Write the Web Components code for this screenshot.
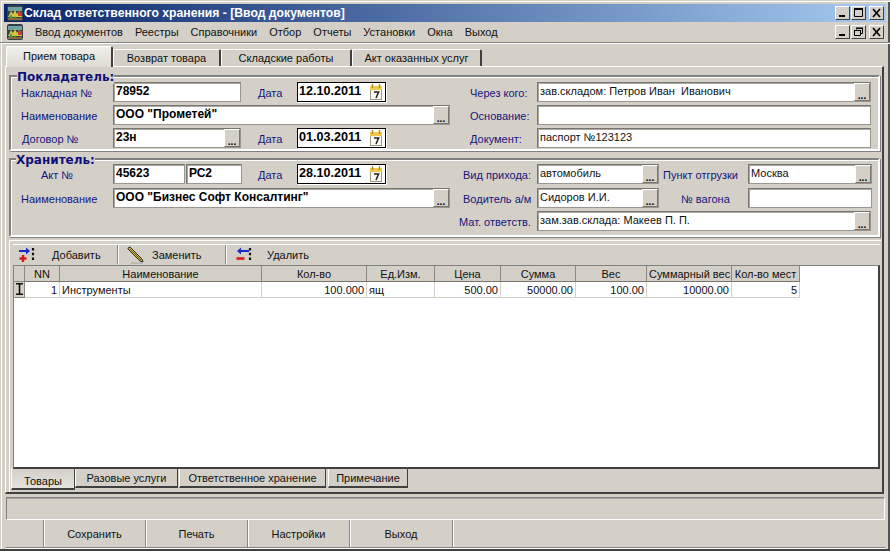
<!DOCTYPE html>
<html lang="ru">
<head>
<meta charset="utf-8">
<title>Склад ответственного хранения</title>
<style>
    html, body { margin: 0; padding: 0; background: #d4d0c8; overflow: hidden; }
    body { font: 11px "Liberation Sans", sans-serif; color: #000; }
</style>
</head>
<body>
<app-window>
    <title-bar>Склад ответственного хранения - [Ввод документов]</title-bar>
    <menu-bar>
        <menu-item>Ввод документов</menu-item>
        <menu-item>Реестры</menu-item>
        <menu-item>Справочники</menu-item>
        <menu-item>Отбор</menu-item>
        <menu-item>Отчеты</menu-item>
        <menu-item>Установки</menu-item>
        <menu-item>Окна</menu-item>
        <menu-item>Выход</menu-item>
    </menu-bar>
    <tab-strip>
        <top-tab active style="width:107px">Прием товара</top-tab>
        <top-tab style="width:108px">Возврат товара</top-tab>
        <top-tab style="width:131px">Складские работы</top-tab>
        <top-tab style="width:130px">Акт оказанных услуг</top-tab>
    </tab-strip>
    <tab-page>
        <form-group legend="Покладатель:" style="--cols:102px 128px 56px 89px 64px 87px 334px; --gap:3px; --pad-top:5px; --pad-bottom:1px">
            <form-label style="padding-left:10px">Накладная №</form-label>
            <text-field bold>78952</text-field>
            <form-label style="padding-left:17px">Дата</form-label>
            <date-field>12.10.2011</date-field>
            <span></span>
            <form-label style="padding-left:20px">Через кого:</form-label>
            <text-field picker>зав.складом: Петров Иван&nbsp; Иванович</text-field>

            <form-label style="padding-left:10px">Наименование</form-label>
            <text-field bold picker style="grid-column:2 / 6">ООО "Прометей"</text-field>
            <form-label style="padding-left:20px">Основание:</form-label>
            <text-field></text-field>

            <form-label style="padding-left:11px">Договор №</form-label>
            <text-field bold picker>23н</text-field>
            <form-label style="padding-left:17px">Дата</form-label>
            <date-field>01.03.2011</date-field>
            <span></span>
            <form-label style="padding-left:20px">Документ:</form-label>
            <text-field>паспорт №123123</text-field>
        </form-group>
        <form-group legend="Хранитель:" style="--cols:102px 72px 57px 55px 89px 64px 87px 122px 89px 124px; --gap:3.5px; --pad-top:4px; --pad-bottom:3.5px; --legend-left:5px">
            <form-label style="padding-left:30px">Акт №</form-label>
            <text-field bold>45623</text-field>
            <text-field bold style="margin-left:1px">РС2</text-field>
            <form-label style="padding-left:16px">Дата</form-label>
            <date-field>28.10.2011</date-field>
            <span></span>
            <form-label style="padding-left:13px">Вид прихода:</form-label>
            <text-field picker>автомобиль</text-field>
            <form-label style="padding-left:4px">Пункт отгрузки</form-label>
            <text-field picker>Москва</text-field>

            <form-label style="padding-left:10px">Наименование</form-label>
            <text-field bold picker style="grid-column:2 / 7">ООО "Бизнес Софт Консалтинг"</text-field>
            <form-label style="padding-left:13px">Водитель а/м</form-label>
            <text-field picker>Сидоров И.И.</text-field>
            <form-label style="padding-left:22px">№ вагона</form-label>
            <text-field></text-field>

            <span style="grid-column:1 / 7"></span>
            <form-label style="padding-left:9px">Мат. ответств.</form-label>
            <text-field picker style="grid-column:8 / 11; margin-right:1px">зам.зав.склада: Макеев П. П.</text-field>
        </form-group>
        <goods-panel>
            <tool-bar>
                <tool-button icon="add" style="width:101px; --label-left:16px">Добавить</tool-button>
                <tool-button icon="edit" style="width:108px; --icon-left:9px; --label-left:7px">Заменить</tool-button>
                <tool-button icon="remove" style="width:100px; --icon-left:9px; --label-left:14px">Удалить</tool-button>
            </tool-bar>
            <data-grid></data-grid>
            <bottom-tabs>
                <bottom-tab active style="width:64px">Товары</bottom-tab>
                <bottom-tab style="width:103px">Разовые услуги</bottom-tab>
                <bottom-tab style="width:147px; margin-left:1px">Ответственное хранение</bottom-tab>
                <bottom-tab style="width:80px; margin-left:2px">Примечание</bottom-tab>
            </bottom-tabs>
        </goods-panel>
    </tab-page>
    <status-panel></status-panel>
    <command-bar>
        <command-button style="width:38px"></command-button>
        <command-button style="width:102px">Сохранить</command-button>
        <command-button style="width:102px">Печать</command-button>
        <command-button style="width:102px">Настройки</command-button>
        <command-button style="width:103px">Выход</command-button>
        <command-button style="flex:1"></command-button>
    </command-bar>
</app-window>

<script>
const uiFont = '11px "Liberation Sans", sans-serif';
const boldFont = 'bold 12px "Liberation Sans", sans-serif';

const appIcon = `
<svg width="18" height="18" viewBox="0 0 18 18">
    <rect x="1" y="1" width="16" height="16" rx="2" fill="#33404a"/>
    <rect x="2" y="3" width="14" height="4" fill="#6fa3a0"/>
    <path d="M2 13l3-6 2 3 2-4 2 4 2-3 3 4v2H2z" fill="#d8c53a"/>
    <path d="M3 14l2-4 2 4zM8 15l1-3 2 3z" fill="#3e9a3c"/>
    <rect x="12" y="8" width="4" height="4" fill="#c8402c"/>
    <rect x="2" y="14" width="14" height="2" fill="#8a6a3a"/>
</svg>`;

const captionStyle = `
    .caption { display: flex; }
    .caption button {
        width: 15px;
        height: 14px;
        padding: 0;
        margin: 0;
        background: #d4d0c8;
        border: 1px solid;
        border-color: #fff #404040 #404040 #fff;
        display: flex;
        align-items: center;
        justify-content: center;
    }
    .caption button + button { margin-left: 1px; }
    .caption button:last-child { margin-left: 3px; }
`;

const captionIcons = {
    min: '<svg width="11" height="10" viewBox="0 0 11 10"><rect x="2" y="7" width="6" height="2" fill="#000"/></svg>',
    max: '<svg width="11" height="10" viewBox="0 0 11 10"><path d="M1.5 1.5h8v7h-8z M1 1.5h9" fill="none" stroke="#000"/><rect x="1" y="0" width="9" height="2" fill="#000"/></svg>',
    restore: '<svg width="11" height="10" viewBox="0 0 11 10"><path d="M3.5 2.5v-1h6v5h-2M1.5 3.5h6v5h-6z" fill="none" stroke="#000"/><path d="M3 1h7M1 3.5h7" stroke="#000"/></svg>',
    close: '<svg width="11" height="10" viewBox="0 0 11 10"><path d="M2 1l7 8M9 1l-7 8" stroke="#000" stroke-width="1.6"/></svg>'
};

customElements.define('app-window', class extends HTMLElement {
    constructor() {
        super();
        this.attachShadow({mode: 'open'}).innerHTML = `
        <style>
            :host {
                display: flex;
                flex-direction: column;
                box-sizing: border-box;
                width: 890px;
                height: 551px;
                padding: 4px 0 0;
                background: #d4d0c8;
                border-bottom: 2px solid #404040;
                box-shadow: inset 1px 1px 0 #d4d0c8, inset 2px 2px 0 #fff, inset -2px 0 0 #55534e;
            }
        </style>
        <slot></slot>`;
    }
});

customElements.define('title-bar', class extends HTMLElement {
    constructor() {
        super();
        this.attachShadow({mode: 'open'}).innerHTML = `
        <style>
            :host {
                display: flex;
                align-items: center;
                flex: none;
                height: 18px;
                margin: 0 4px;
                padding-left: 2px;
                color: #fff;
                font: bold 12.2px "Liberation Sans", sans-serif;
                background: linear-gradient(90deg, #0a246a, #a6caf0);
            }
            svg { flex: none; margin-right: 0; }
            .text { flex: 1; white-space: nowrap; }
            .caption { margin-right: 2px; }
            ${captionStyle}
        </style>
        ${appIcon}
        <div class="text"><slot></slot></div>
        <div class="caption">
            <button>${captionIcons.min}</button>
            <button>${captionIcons.max}</button>
            <button>${captionIcons.close}</button>
        </div>`;
    }
});

customElements.define('menu-bar', class extends HTMLElement {
    constructor() {
        super();
        this.attachShadow({mode: 'open'}).innerHTML = `
        <style>
            :host {
                display: flex;
                align-items: center;
                flex: none;
                box-sizing: border-box;
                height: 22px;
                padding: 0 6px 2px 6px;
                border-bottom: 1px solid #fff;
                box-shadow: inset 0 -1px 0 #808080;
            }
            .items { flex: 1; display: flex; margin-left: 5px; }
            ${captionStyle}
        </style>
        ${appIcon}
        <div class="items"><slot></slot></div>
        <div class="caption">
            <button>${captionIcons.min}</button>
            <button>${captionIcons.restore}</button>
            <button>${captionIcons.close}</button>
        </div>`;
    }
});

customElements.define('menu-item', class extends HTMLElement {
    constructor() {
        super();
        this.attachShadow({mode: 'open'}).innerHTML = `
        <style>
            :host {
                display: block;
                padding: 0 6px;
                font: ${uiFont};
                color: #111;
                white-space: nowrap;
            }
        </style>
        <slot></slot>`;
    }
});

customElements.define('tab-strip', class extends HTMLElement {
    constructor() {
        super();
        this.attachShadow({mode: 'open'}).innerHTML = `
        <style>
            :host {
                display: flex;
                align-items: flex-end;
                flex: none;
                height: 20px;
                margin-top: 2px;
                padding-left: 6px;
                position: relative;
                z-index: 1;
            }
        </style>
        <slot></slot>`;
    }
});

customElements.define('top-tab', class extends HTMLElement {
    constructor() {
        super();
        this.attachShadow({mode: 'open'}).innerHTML = `
        <style>
            :host {
                display: flex;
                align-items: center;
                justify-content: center;
                box-sizing: border-box;
                height: 17px;
                border-top: 1px solid #fff;
                border-left: 1px solid #fff;
                border-right: 2px solid #404040;
                border-radius: 2px 2px 0 0;
                font: ${uiFont};
                color: #111;
                white-space: nowrap;
            }
            :host([active]) {
                height: 21px;
                margin-bottom: -1px;
                padding-bottom: 2px;
                background: linear-gradient(#f0efea, #dedbd3);
            }
        </style>
        <slot></slot>`;
    }
});

customElements.define('tab-page', class extends HTMLElement {
    constructor() {
        super();
        this.attachShadow({mode: 'open'}).innerHTML = `
        <style>
            :host {
                display: flex;
                flex-direction: column;
                flex: 1;
                min-height: 0;
                box-sizing: border-box;
                margin: 0 5px 0 5px;
                padding: 8px 3px 0 3px;
                border-top: 1px solid #fff;
                border-left: 1px solid #fff;
                border-right: 2px solid #404040;
                border-bottom: 2px solid #404040;
                margin-right: 6px;
            }
        </style>
        <slot></slot>`;
    }
});

customElements.define('form-group', class extends HTMLElement {
    constructor() {
        super();
        this.attachShadow({mode: 'open'}).innerHTML = `
        <style>
            :host {
                display: block;
                position: relative;
                flex: none;
                width: 871px;
                box-sizing: border-box;
                margin-bottom: 7px;
                border: 2px solid;
                border-color: #808080 #fff #fff #808080;
                box-shadow: inset 1px 1px 0 #fff, 1px 1px 0 #808080;
            }
            :host(:nth-of-type(2)) { margin-bottom: 3px; }
            .legend {
                position: absolute;
                left: var(--legend-left, 6px);
                top: -6px;
                background: #d4d0c8;
                color: #10107a;
                font: bold 12px "DejaVu Sans", sans-serif;
                line-height: 13px;
                white-space: nowrap;
            }
            .rows {
                display: grid;
                grid-template-columns: var(--cols);
                grid-auto-rows: 20px;
                row-gap: var(--gap);
                padding: var(--pad-top) 0 var(--pad-bottom);
            }
        </style>
        <div class="legend"></div>
        <div class="rows"><slot></slot></div>`;
    }

    connectedCallback() {
        this.shadowRoot.querySelector('.legend').textContent = this.getAttribute('legend');
    }
});

customElements.define('form-label', class extends HTMLElement {
    constructor() {
        super();
        this.attachShadow({mode: 'open'}).innerHTML = `
        <style>
            :host {
                display: flex;
                align-items: center;
                padding-top: 2px;
                box-sizing: border-box;
                color: #14147c;
                font: ${uiFont};
                white-space: nowrap;
            }
        </style>
        <slot></slot>`;
    }
});

customElements.define('text-field', class extends HTMLElement {
    constructor() {
        super();
        this.attachShadow({mode: 'open'}).innerHTML = `
        <style>
            :host {
                display: flex;
                box-sizing: border-box;
                height: 20px;
                background: #fff;
                border: 1px solid;
                border-color: #77756e #98968f #98968f #77756e;
                box-shadow: inset 1px 1px 0 #aaa8a2;
                font: ${uiFont};
                color: #111;
                min-width: 0;
            }
            :host([bold]) { font: ${boldFont}; color: #000; }
            .text { flex: 1; padding: 1px 0 0 2px; white-space: nowrap; overflow: hidden; line-height: 14px; }
            button {
                display: none;
                flex: none;
                width: 16px;
                margin: 0;
                padding: 0;
                background: #d4d0c8;
                border: 1px solid;
                border-color: #fff #77756e #77756e #fff;
                font: bold 10px "Liberation Sans", sans-serif;
                line-height: 24px;
                height: 18px;
                overflow: hidden;
            }
            :host([picker]) button { display: block; }
        </style>
        <div class="text"><slot></slot></div>
        <button>...</button>`;
    }
});

customElements.define('date-field', class extends HTMLElement {
    constructor() {
        super();
        this.attachShadow({mode: 'open'}).innerHTML = `
        <style>
            :host {
                display: flex;
                align-items: flex-start;
                box-sizing: border-box;
                height: 20px;
                background: #fff;
                border: 1px solid #000;
                box-shadow: 1px 1px 0 #fff;
                font: bold 12.6px "Liberation Sans", sans-serif;
                color: #000;
            }
            .text { flex: 1; padding: 1px 0 0 1px; line-height: 14px; white-space: nowrap; }
            svg { flex: none; margin: 0 2px 0 0; }
        </style>
        <div class="text"><slot></slot></div>
        <svg width="14" height="18" viewBox="0 0 14 18">
            <rect x="1.5" y="3.5" width="11" height="13" fill="#fbfaf4" stroke="#a09a80"/>
            <rect x="1" y="3" width="12" height="4" fill="#f0c84c"/>
            <path d="M3.5 1v4M10.5 1v4" stroke="#b08a20" stroke-width="1.4"/>
            <path d="M5 9h4.6L7 15" fill="none" stroke="#222" stroke-width="1.5"/>
        </svg>`;
    }
});

customElements.define('goods-panel', class extends HTMLElement {
    constructor() {
        super();
        this.attachShadow({mode: 'open'}).innerHTML = `
        <style>
            :host {
                display: flex;
                flex-direction: column;
                flex: 1;
                min-height: 0;
                width: 872px;
                box-sizing: border-box;
                padding: 3px 1px 0 3px;
                border-top: 1px solid #fff;
                border-left: 1px solid #fff;
            }
        </style>
        <slot></slot>`;
    }
});

customElements.define('tool-bar', class extends HTMLElement {
    constructor() {
        super();
        this.attachShadow({mode: 'open'}).innerHTML = `
        <style>
            :host {
                display: flex;
                align-items: center;
                flex: none;
                box-sizing: border-box;
                height: 21px;
                padding-left: 4px;
                border-top: 1px solid #fff;
            }
        </style>
        <slot></slot>`;
    }
});

const toolIcons = {
    add: `<svg width="18" height="18" viewBox="0 0 18 18">
        <path d="M1 5h9" stroke="#1a2ac8" stroke-width="2"/><path d="M8 1.5l4 3.5-4 3.5z" fill="#1a2ac8"/>
        <path d="M5 9v7M1.5 12.5h7" stroke="#d81818" stroke-width="2.4"/>
        <path d="M15 2v14" stroke="#111" stroke-width="2.2" stroke-dasharray="2.4 2.4"/>
    </svg>`,
    edit: `<svg width="18" height="18" viewBox="0 0 18 18">
        <path d="M1 2l2-1 12 12 1 3-3-1L1 3z" fill="#d8b848" stroke="#2c2c24"/>
        <path d="M3 3l11 11" stroke="#6e5a18"/>
        <path d="M4 17h12" stroke="#a8a69e"/>
    </svg>`,
    remove: `<svg width="18" height="18" viewBox="0 0 18 18">
        <path d="M5 5h9" stroke="#1a2ac8" stroke-width="2"/><path d="M6 1.5L2 5l4 3.5z" fill="#1a2ac8"/>
        <path d="M1.5 12.5h8" stroke="#d81818" stroke-width="2.6"/>
        <path d="M15 2v14" stroke="#111" stroke-width="2.2" stroke-dasharray="2.4 2.4"/>
    </svg>`
};

customElements.define('tool-button', class extends HTMLElement {
    constructor() {
        super();
        this.attachShadow({mode: 'open'}).innerHTML = `
        <style>
            :host {
                display: flex;
                align-items: center;
                flex: none;
                box-sizing: border-box;
                height: 19px;
                font: ${uiFont};
                color: #111;
                white-space: nowrap;
                border-right: 1px solid #8a8880;
                box-shadow: 1px 0 0 #fff;
            }
            :host(:last-child) { border: 0; box-shadow: none; }
            .icon { flex: none; display: flex; margin-left: var(--icon-left, 1px); }
            .label { margin-left: var(--label-left, 10px); }
        </style>
        <span class="icon"></span>
        <span class="label"><slot></slot></span>`;
    }

    connectedCallback() {
        this.shadowRoot.querySelector('.icon').innerHTML = toolIcons[this.getAttribute('icon')];
    }
});

customElements.define('data-grid', class extends HTMLElement {
    constructor() {
        super();
        this.attachShadow({mode: 'open'}).innerHTML = `
        <style>
            :host {
                display: block;
                flex: 1;
                min-height: 0;
                box-sizing: border-box;
                background: #fff;
                border: 2px solid;
                border-color: #808080 #404040 #404040 #808080;
                border-width: 1px 2px 2px 1px;
            }
            .table {
                display: grid;
                grid-template-columns: 11px 35px 202px 105px 68px 66px 75px 71px 85px 68px;
                grid-template-rows: 16px 16px;
                width: max-content;
                font: ${uiFont};
                color: #111;
            }
            .table > div {
                box-sizing: border-box;
                padding: 1px 2px 0;
                line-height: 14px;
                white-space: nowrap;
                overflow: hidden;
            }
            .head {
                background: #d4d0c8;
                text-align: center;
                border-right: 1px solid #8a8880;
                border-bottom: 1px solid #77756e;
            }
            .cell {
                text-align: right;
                border-right: 1px solid #d4d0c8;
                border-bottom: 1px solid #d4d0c8;
            }
            .cell.left { text-align: left; }
            .table > .ind {
                background: #d4d0c8;
                padding: 0;
                border-right: 1px solid #8a8880;
                border-bottom: 1px solid #8a8880;
                display: flex;
                align-items: center;
                justify-content: center;
            }
        </style>
        <div class="table"></div>`;
    }

    connectedCallback() {
        const heads = ['NN', 'Наименование', 'Кол-во', 'Ед.Изм.', 'Цена', 'Сумма', 'Вес', 'Суммарный вес', 'Кол-во мест'];
        const row = ['1', 'Инструменты', '100.000', 'ящ', '500.00', '50000.00', '100.00', '10000.00', '5'];
        const leftCols = [1, 3];
        let html = '<div class="ind"></div>';
        html += heads.map(h => `<div class="head">${h}</div>`).join('');
        html += `<div class="ind"><svg width="9" height="12" viewBox="0 0 9 12"><path d="M1 .8h7M1 11.2h7M4.5 1v10" stroke="#111" stroke-width="1.6" fill="none"/></svg></div>`;
        html += row.map((c, i) => `<div class="cell${leftCols.includes(i) ? ' left' : ''}">${c}</div>`).join('');
        this.shadowRoot.querySelector('.table').innerHTML = html;
    }
});

customElements.define('bottom-tabs', class extends HTMLElement {
    constructor() {
        super();
        this.attachShadow({mode: 'open'}).innerHTML = `
        <style>
            :host {
                display: flex;
                align-items: flex-start;
                flex: none;
                height: 23px;
            }
        </style>
        <slot></slot>`;
    }
});

customElements.define('bottom-tab', class extends HTMLElement {
    constructor() {
        super();
        this.attachShadow({mode: 'open'}).innerHTML = `
        <style>
            :host {
                display: flex;
                align-items: center;
                justify-content: center;
                box-sizing: border-box;
                height: 19px;
                padding-top: 1px;
                border-left: 1px solid #fff;
                border-right: 1px solid #404040;
                border-bottom: 2px solid #404040;
                font: ${uiFont};
                color: #111;
                white-space: nowrap;
            }
            :host([active]) {
                height: 21px;
                margin-left: -2px;
                padding-top: 4px;
                background: linear-gradient(#d4d0c8, #e4e2dc);
            }
        </style>
        <slot></slot>`;
    }
});

customElements.define('status-panel', class extends HTMLElement {
    constructor() {
        super();
        this.attachShadow({mode: 'open'}).innerHTML = `
        <style>
            :host {
                display: block;
                flex: none;
                box-sizing: border-box;
                height: 23px;
                margin: 3px 5px 0 6px;
                border: 1px solid;
                border-color: #808080 #fff #fff #808080;
                box-shadow: inset 0 1px 0 #aaa8a2;
            }
        </style>`;
    }
});

customElements.define('command-bar', class extends HTMLElement {
    constructor() {
        super();
        this.attachShadow({mode: 'open'}).innerHTML = `
        <style>
            :host {
                display: flex;
                flex: none;
                height: 29px;
                box-sizing: border-box;
                margin: 0 5px 0 6px;
                border-bottom: 1px solid #fff;
                box-shadow: inset 0 -1px 0 #808080;
            }
        </style>
        <slot></slot>`;
    }
});

customElements.define('command-button', class extends HTMLElement {
    constructor() {
        super();
        this.attachShadow({mode: 'open'}).innerHTML = `
        <style>
            :host {
                display: flex;
                align-items: center;
                justify-content: center;
                box-sizing: border-box;
                height: 27px;
                font: ${uiFont};
                color: #111;
                border-right: 1px solid #8a8880;
                box-shadow: 1px 0 0 #fff;
            }
            :host(:last-child) { border: 0; box-shadow: none; }
        </style>
        <slot></slot>`;
    }
});
</script>
</body>
</html>
